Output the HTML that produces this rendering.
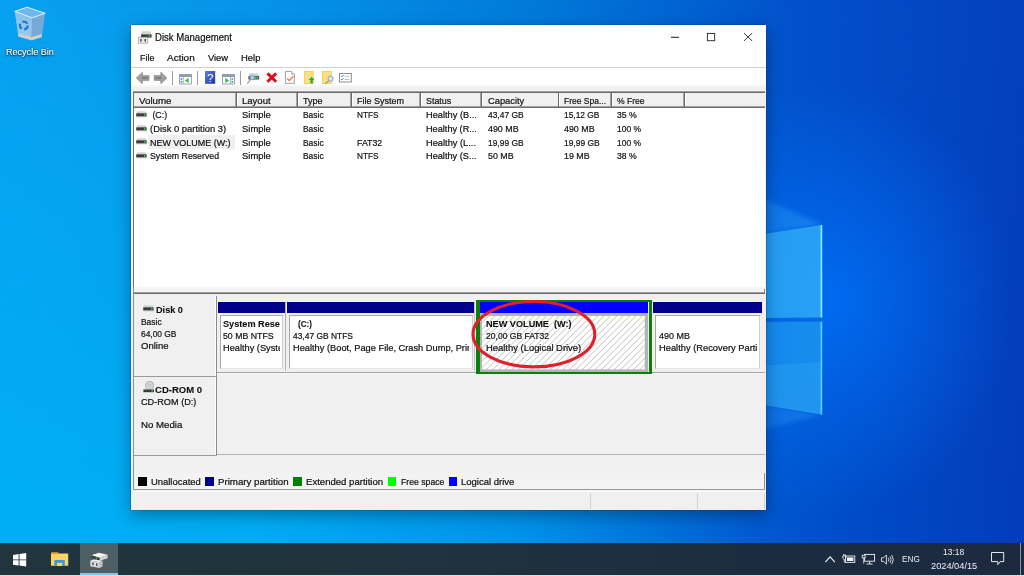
<!DOCTYPE html>
<html lang="en"><head><meta charset="utf-8"><title>Disk Management</title>
<style>
html,body{margin:0;padding:0}
body{width:1024px;height:576px;overflow:hidden;position:relative;font-family:"Liberation Sans",sans-serif;font-size:9.5px;background:#0a6fd6;-webkit-text-stroke:.22px currentColor}
div,span,svg{box-sizing:border-box}
svg{position:absolute;overflow:visible}
</style></head><body>
<div id="wallpaper" style="position:absolute;left:0;top:0;width:1024px;height:576px;overflow:hidden;background:linear-gradient(90deg,#00b0f6 0.0%,#00aff5 24.4%,#00a0f0 39.1%,#0096eb 50.0%,#0078dc 62.5%,#005ad0 74.2%,#004cc8 83.0%,#043cba 100.0%)"><div style="position:absolute;left:0;top:0;width:1024px;height:576px;background:linear-gradient(90deg,#06a0f0 0.0%,#089eee 5.9%,#0590e6 29.3%,#0078d8 52.7%,#0060d0 68.4%,#0250ca 78.1%,#0440be 100.0%);-webkit-mask-image:linear-gradient(180deg,#000 0%,rgba(0,0,0,0) 100%);mask-image:linear-gradient(180deg,#000 0%,rgba(0,0,0,0) 100%)"></div><div style="position:absolute;left:0;top:0;width:1024px;height:576px;background:radial-gradient(ellipse 185px 215px at 828px 300px,rgba(0,118,255,.72),rgba(0,118,255,0) 100%)"></div><svg width="1024" height="576" style="left:0;top:0"><defs><linearGradient id="pg" x1="0" x2="1"><stop offset="0" stop-color="#22a6f6"/><stop offset="1" stop-color="#34b0f8"/></linearGradient><linearGradient id="pg2" x1="0" x2="1"><stop offset="0" stop-color="#1890ee"/><stop offset="1" stop-color="#209cf2"/></linearGradient></defs><linearGradient id="bm" x1="1" x2="0"><stop offset="0" stop-color="#38b0ff" stop-opacity=".42"/><stop offset="1" stop-color="#20a0ff" stop-opacity=".12"/></linearGradient><filter id="bl" x="-20%" y="-20%" width="140%" height="140%"><feGaussianBlur stdDeviation="2.5"/></filter><polygon points="822,225 700,170 700,243" fill="url(#bm)" filter="url(#bl)"/><polygon points="822,414.6 700,395 700,446" fill="url(#bm)" opacity=".8" filter="url(#bl)"/><polygon points="660,250 822,225 822,317.5 660,319" fill="url(#pg)" opacity=".78"/><polygon points="660,322 822,321.7 822,414.6 660,388" fill="url(#pg2)" opacity=".72"/><polygon points="660,372 822,362 822,414.6 660,388" fill="#38b0f8" opacity=".28"/><line x1="821.4" y1="225" x2="821.4" y2="317.5" stroke="#86ecff" stroke-width="1.7"/><line x1="821.4" y1="321.7" x2="821.4" y2="414.6" stroke="#5cd4fd" stroke-width="1.6"/></svg></div>
<div id="recycle-bin" style="position:absolute;left:0;top:0"><svg width="34" height="36" viewBox="0 0 34 36" style="left:12.5px;top:6px"><defs><linearGradient id="rb" x1="0" y1="0" x2="0" y2="1"><stop offset="0" stop-color="#8ec2e8"/><stop offset="1" stop-color="#a6cdea"/></linearGradient></defs><polygon points="1.7,5.4 19.2,11.8 18.6,34.3 5.5,30.5" fill="url(#rb)" opacity=".95"/><polygon points="19.2,11.8 32.2,7.3 28.6,31.2 18.6,34.3" fill="#7caad6" opacity=".95"/><polygon points="1.7,5.4 14.2,1.2 32.2,7.3 19.2,11.8" fill="#6cb8ee" stroke="#e4f2fb" stroke-width="1"/><polygon points="5.1,27.2 18.7,31 29.1,27.8 28.6,31.2 18.6,34.3 5.5,30.5" fill="#cfcfcf"/><circle cx="10.8" cy="19.6" r="3.9" fill="none" stroke="#1a7ad8" stroke-width="2.3" stroke-dasharray="5.6 2.6"/></svg>
<span style="position:absolute;left:6.10px;top:46.76px;font-size:9.5px;line-height:1;white-space:pre;color:#fff;transform-origin:0 0;transform:scaleX(0.9527);-webkit-text-stroke:.1px #fff;text-shadow:0 1px 2px rgba(0,0,0,.9),0 0 2px rgba(0,0,0,.7);">Recycle Bin</span>
</div>
<div id="window" style="position:absolute;left:0;top:0">
<div style="position:absolute;left:131.40px;top:25.20px;width:635.10px;height:484.50px;background:#f0f0f0;box-shadow:0 0 0 .6px rgba(0,55,105,.35),0 5px 15px rgba(0,0,0,.34);"></div>
<div style="position:absolute;left:131.40px;top:25.20px;width:635.10px;height:60.10px;background:#ffffff;"></div>
<div style="position:absolute;left:131.40px;top:67.10px;width:635.10px;height:0.90px;background:#cfcfcf;"></div>
<div style="position:absolute;left:131.40px;top:85.30px;width:635.10px;height:1.60px;background:#f6f6f6;"></div>
<svg width="14" height="13" viewBox="0 0 14 13" style="left:138px;top:30.6px"><polygon points="4,0.3 12.3,0.3 13.6,3.6 3,3.6" fill="#d2d2d2"/><rect x="3" y="3.4" width="10.6" height="3.2" fill="#3c3c3c"/><rect x="10.6" y="4.3" width="1.6" height="1.4" fill="#35e04a"/><rect x="0.4" y="6.3" width="9.4" height="5.9" fill="#e9e9e9" stroke="#a8a8a8" stroke-width=".8"/><rect x="2.3" y="8" width="1.3" height="2.6" fill="#333"/><rect x="6.6" y="8" width="1.3" height="2.6" fill="#333"/></svg>
<span style="position:absolute;left:155.25px;top:32.94px;font-size:10px;line-height:1;white-space:pre;color:#111;transform-origin:0 0;transform:scaleX(0.9554);">Disk Management</span>
<svg width="100" height="12" viewBox="0 0 100 12" style="left:665px;top:31px"><line x1="6" y1="6.3" x2="14.1" y2="6.3" stroke="#1a1a1a" stroke-width="1"/><rect x="42.4" y="2.4" width="7.3" height="7.3" fill="none" stroke="#222" stroke-width=".9"/><path d="M79 2.1 L87.2 9.9 M87.2 2.1 L79 9.9" stroke="#222" stroke-width=".9" fill="none"/></svg>
<span style="position:absolute;left:140.10px;top:53.46px;font-size:9.5px;line-height:1;white-space:pre;color:#111;transform-origin:0 0;transform:scaleX(0.9404);">File</span>
<span style="position:absolute;left:167.40px;top:53.46px;font-size:9.5px;line-height:1;white-space:pre;color:#111;transform-origin:0 0;transform:scaleX(1.0490);">Action</span>
<span style="position:absolute;left:208.00px;top:53.46px;font-size:9.5px;line-height:1;white-space:pre;color:#111;transform-origin:0 0;transform:scaleX(0.9793);">View</span>
<span style="position:absolute;left:240.90px;top:53.46px;font-size:9.5px;line-height:1;white-space:pre;color:#111;transform-origin:0 0;transform:scaleX(0.9925);">Help</span>
<div id="toolbar" style="position:absolute;left:0;top:0">
<svg width="13.2" height="12" viewBox="0 0 13.2 12" style="left:135.8px;top:72px"><path d="M0.4 6 L6.3 0.4 L6.3 3.7 L12.9 3.7 L12.9 8.3 L6.3 8.3 L6.3 11.6 Z" fill="#a2a2a2" stroke="#7e7e7e" stroke-width=".8" stroke-linejoin="round"/><path d="M5.6 5 L11.8 5 L11.8 7 L5.6 7Z" fill="#6a6a6a" opacity=".6"/></svg>
<svg width="13.2" height="12" viewBox="0 0 13.2 12" style="left:154px;top:72px"><path d="M12.8 6 L6.9 0.4 L6.9 3.7 L0.3 3.7 L0.3 8.3 L6.9 8.3 L6.9 11.6 Z" fill="#a2a2a2" stroke="#7e7e7e" stroke-width=".8" stroke-linejoin="round"/><path d="M1.4 5 L7.6 5 L7.6 7 L1.4 7Z" fill="#6a6a6a" opacity=".6"/></svg>
<div style="position:absolute;left:172.00px;top:70.50px;width:0.90px;height:14.20px;background:#9d9d9d;"></div>
<div style="position:absolute;left:197.00px;top:70.50px;width:0.90px;height:14.20px;background:#9d9d9d;"></div>
<div style="position:absolute;left:240.00px;top:70.50px;width:0.90px;height:14.20px;background:#9d9d9d;"></div>
<svg width="12.8" height="10.4" viewBox="0 0 12.8 10.4" style="left:179.1px;top:73.6px"><rect x=".4" y=".4" width="12" height="9.6" fill="#fdfdfd" stroke="#8692a4" stroke-width=".8"/><rect x=".4" y=".4" width="12" height="2.6" fill="#8f9aab"/><line x1="4.2" y1="3" x2="4.2" y2="10" stroke="#8692a4" stroke-width=".7"/><rect x="1.6" y="4.2" width="1.6" height="1.6" fill="#4a86d8"/><rect x="1.6" y="7" width="1.6" height="1.6" fill="#4a86d8"/><path d="M6 6.5 L9.6 4 L9.6 9 Z" fill="#2db83a"/></svg>
<svg width="10.2" height="12.8" viewBox="0 0 10.2 12.8" style="left:204.9px;top:71px"><defs><linearGradient id="hg" x1="0" y1="0" x2="1" y2="1"><stop offset="0" stop-color="#5a7fe0"/><stop offset="1" stop-color="#1c35a8"/></linearGradient></defs><rect width="10.2" height="12.8" fill="url(#hg)"/><text x="5.1" y="10.6" text-anchor="middle" font-family="Liberation Sans, sans-serif" font-weight="400" font-size="11.5" fill="#fff" style="-webkit-text-stroke:0">?</text></svg>
<svg width="12.8" height="10.4" viewBox="0 0 12.8 10.4" style="left:222.2px;top:73.6px"><rect x=".4" y=".4" width="12" height="9.6" fill="#fdfdfd" stroke="#8692a4" stroke-width=".8"/><rect x=".4" y=".4" width="12" height="2.6" fill="#8f9aab"/><line x1="8.6" y1="3" x2="8.6" y2="10" stroke="#8692a4" stroke-width=".7"/><rect x="9.6" y="4.2" width="1.6" height="1.6" fill="#4a86d8"/><rect x="9.6" y="7" width="1.6" height="1.6" fill="#4a86d8"/><path d="M7 6.5 L3.4 4 L3.4 9 Z" fill="#2db83a"/></svg>
<svg width="12.4" height="11" viewBox="0 0 12.4 11" style="left:247px;top:73px"><polygon points="2.6,0.2 11,0.2 12.2,3.2 1.4,3.2" fill="#cfd2d6"/><rect x="1.4" y="3.1" width="10.8" height="3.4" fill="#4a5058"/><rect x="7.6" y="4" width="1.5" height="1.6" fill="#3fe052"/><rect x="9.6" y="4" width="1.5" height="1.6" fill="#3fe052"/><circle cx="5.2" cy="4.6" r="2.3" fill="#a8cdee" stroke="#7d8ea3" stroke-width=".8"/><line x1="3.6" y1="6.4" x2="0.3" y2="10.6" stroke="#8a93a0" stroke-width="1.1"/></svg>
<svg width="11.6" height="11.2" viewBox="0 0 11.6 11.2" style="left:266.3px;top:72.1px"><path d="M1.4 1.4 L10.2 9.8 M10.2 1.4 L1.4 9.8" stroke="#d8101c" stroke-width="2.9" fill="none"/></svg>
<svg width="10" height="13" viewBox="0 0 10 13" style="left:285.4px;top:71px"><path d="M0.4 0.4 L6.6 0.4 L9.4 3.2 L9.4 12.4 L0.4 12.4 Z" fill="#fff" stroke="#8a8a8a" stroke-width=".8"/><path d="M6.6 0.4 L6.6 3.2 L9.4 3.2" fill="#e8e8e8" stroke="#8a8a8a" stroke-width=".6"/><path d="M2.2 7.4 L4.2 9.6 L8.4 5.2" stroke="#f0702c" stroke-width="1.3" fill="none"/></svg>
<svg width="10.6" height="13" viewBox="0 0 10.6 13" style="left:304px;top:71px"><rect x=".4" y=".4" width="8.8" height="12.2" fill="#fce083" stroke="#efca50" stroke-width=".8"/><path d="M7.6 5.8 L10.6 9 L8.8 9 L8.8 12.4 L6.4 12.4 L6.4 9 L4.6 9 Z" fill="#22b638"/></svg>
<svg width="12" height="13" viewBox="0 0 12 13" style="left:322.2px;top:71px"><rect x=".4" y=".4" width="8.8" height="12.2" fill="#fce083" stroke="#efca50" stroke-width=".8"/><circle cx="8.6" cy="7.6" r="2.6" fill="#cfe6f8" stroke="#8a98aa" stroke-width=".9"/><line x1="6.8" y1="9.6" x2="3.4" y2="12.6" stroke="#8a93a0" stroke-width="1.2"/></svg>
<svg width="13" height="9.6" viewBox="0 0 13 9.6" style="left:339.2px;top:73.2px"><rect x=".5" y=".5" width="11.8" height="8.5" fill="#fff" stroke="#8a8a8a" stroke-width="1"/><path d="M2.2 2.8 L3 3.8 L4.4 2" stroke="#2a6fe0" stroke-width=".9" fill="none"/><path d="M2.2 6 L3 7 L4.4 5.2" stroke="#2a6fe0" stroke-width=".9" fill="none"/><line x1="5.6" y1="3.2" x2="10.4" y2="3.2" stroke="#a0a8b4" stroke-width=".8"/><line x1="5.6" y1="6.4" x2="10.4" y2="6.4" stroke="#a0a8b4" stroke-width=".8"/></svg>
</div>
<div id="volume-list" style="position:absolute;left:0;top:0">
<div style="position:absolute;left:133.30px;top:90.80px;width:632.10px;height:196.20px;background:#ffffff;"></div>
<div style="position:absolute;left:133.30px;top:90.80px;width:632.10px;height:1.00px;background:#a0a0a0;"></div>
<div style="position:absolute;left:133.30px;top:91.80px;width:632.10px;height:1.00px;background:#6a6a6a;"></div>
<div style="position:absolute;left:132.80px;top:90.80px;width:0.70px;height:196.20px;background:#a0a0a0;"></div>
<div style="position:absolute;left:133.40px;top:91.70px;width:0.85px;height:195.30px;background:#727272;"></div>
<div style="position:absolute;left:134.20px;top:92.70px;width:631.20px;height:13.40px;background:#f0f0f0;"></div>
<div style="position:absolute;left:134.20px;top:106.10px;width:631.20px;height:0.90px;background:#a0a0a0;"></div>
<div style="position:absolute;left:134.20px;top:107.00px;width:631.20px;height:0.90px;background:#6e6e6e;"></div>
<div style="position:absolute;left:235.30px;top:92.70px;width:0.85px;height:13.60px;background:#a3a3a3;"></div>
<div style="position:absolute;left:236.15px;top:92.70px;width:0.85px;height:15.20px;background:#6a6a6a;"></div>
<div style="position:absolute;left:237.00px;top:92.70px;width:0.70px;height:13.40px;background:#ffffff;"></div>
<div style="position:absolute;left:296.30px;top:92.70px;width:0.85px;height:13.60px;background:#a3a3a3;"></div>
<div style="position:absolute;left:297.15px;top:92.70px;width:0.85px;height:15.20px;background:#6a6a6a;"></div>
<div style="position:absolute;left:298.00px;top:92.70px;width:0.70px;height:13.40px;background:#ffffff;"></div>
<div style="position:absolute;left:350.30px;top:92.70px;width:0.85px;height:13.60px;background:#a3a3a3;"></div>
<div style="position:absolute;left:351.15px;top:92.70px;width:0.85px;height:15.20px;background:#6a6a6a;"></div>
<div style="position:absolute;left:352.00px;top:92.70px;width:0.70px;height:13.40px;background:#ffffff;"></div>
<div style="position:absolute;left:419.10px;top:92.70px;width:0.85px;height:13.60px;background:#a3a3a3;"></div>
<div style="position:absolute;left:419.95px;top:92.70px;width:0.85px;height:15.20px;background:#6a6a6a;"></div>
<div style="position:absolute;left:420.80px;top:92.70px;width:0.70px;height:13.40px;background:#ffffff;"></div>
<div style="position:absolute;left:480.30px;top:92.70px;width:0.85px;height:13.60px;background:#a3a3a3;"></div>
<div style="position:absolute;left:481.15px;top:92.70px;width:0.85px;height:15.20px;background:#6a6a6a;"></div>
<div style="position:absolute;left:482.00px;top:92.70px;width:0.70px;height:13.40px;background:#ffffff;"></div>
<div style="position:absolute;left:557.50px;top:92.70px;width:0.85px;height:13.60px;background:#a3a3a3;"></div>
<div style="position:absolute;left:558.35px;top:92.70px;width:0.85px;height:15.20px;background:#6a6a6a;"></div>
<div style="position:absolute;left:559.20px;top:92.70px;width:0.70px;height:13.40px;background:#ffffff;"></div>
<div style="position:absolute;left:610.30px;top:92.70px;width:0.85px;height:13.60px;background:#a3a3a3;"></div>
<div style="position:absolute;left:611.15px;top:92.70px;width:0.85px;height:15.20px;background:#6a6a6a;"></div>
<div style="position:absolute;left:612.00px;top:92.70px;width:0.70px;height:13.40px;background:#ffffff;"></div>
<div style="position:absolute;left:683.30px;top:92.70px;width:0.85px;height:13.60px;background:#a3a3a3;"></div>
<div style="position:absolute;left:684.15px;top:92.70px;width:0.85px;height:15.20px;background:#6a6a6a;"></div>
<div style="position:absolute;left:685.00px;top:92.70px;width:0.70px;height:13.40px;background:#ffffff;"></div>
<span style="position:absolute;left:138.60px;top:95.66px;font-size:9.5px;line-height:1;white-space:pre;color:#111;transform-origin:0 0;transform:scaleX(1.0256);">Volume</span>
<span style="position:absolute;left:241.75px;top:95.66px;font-size:9.5px;line-height:1;white-space:pre;color:#111;transform-origin:0 0;transform:scaleX(1.0024);">Layout</span>
<span style="position:absolute;left:303.25px;top:95.66px;font-size:9.5px;line-height:1;white-space:pre;color:#111;transform-origin:0 0;transform:scaleX(0.9510);">Type</span>
<span style="position:absolute;left:356.90px;top:95.66px;font-size:9.5px;line-height:1;white-space:pre;color:#111;transform-origin:0 0;transform:scaleX(0.9451);">File System</span>
<span style="position:absolute;left:425.75px;top:95.66px;font-size:9.5px;line-height:1;white-space:pre;color:#111;transform-origin:0 0;transform:scaleX(0.9355);">Status</span>
<span style="position:absolute;left:487.50px;top:95.66px;font-size:9.5px;line-height:1;white-space:pre;color:#111;transform-origin:0 0;transform:scaleX(0.9806);">Capacity</span>
<span style="position:absolute;left:564.25px;top:95.66px;font-size:9.5px;line-height:1;white-space:pre;color:#111;transform-origin:0 0;transform:scaleX(0.8936);">Free Spa...</span>
<span style="position:absolute;left:617.40px;top:95.66px;font-size:9.5px;line-height:1;white-space:pre;color:#111;transform-origin:0 0;transform:scaleX(0.9012);">% Free</span>
<svg width="10.8" height="6.4" viewBox="0 0 10.8 6.4" style="left:136.4px;top:111.2px"><polygon points="1.4,0.2 9.4,0.2 10.6,2.4 0.2,2.4" fill="#d4d4d4"/><rect x=".2" y="2.3" width="10.4" height="3.3" fill="#3b3b3b"/><rect x="8" y="3.2" width="1.5" height="1.4" fill="#36e04a"/><rect x=".2" y="5.5" width="10.4" height=".8" fill="#bdbdbd"/></svg>
<span style="position:absolute;left:149.90px;top:110.36px;font-size:9.5px;line-height:1;white-space:pre;color:#111;transform-origin:0 0;transform:scaleX(0.9259);"> (C:)</span>
<span style="position:absolute;left:241.75px;top:110.36px;font-size:9.5px;line-height:1;white-space:pre;color:#111;transform-origin:0 0;transform:scaleX(0.9915);">Simple</span>
<span style="position:absolute;left:302.90px;top:110.36px;font-size:9.5px;line-height:1;white-space:pre;color:#111;transform-origin:0 0;transform:scaleX(0.8866);">Basic</span>
<span style="position:absolute;left:356.90px;top:110.36px;font-size:9.5px;line-height:1;white-space:pre;color:#111;transform-origin:0 0;transform:scaleX(0.8665);">NTFS</span>
<span style="position:absolute;left:425.75px;top:110.36px;font-size:9.5px;line-height:1;white-space:pre;color:#111;transform-origin:0 0;transform:scaleX(0.9736);">Healthy (B...</span>
<span style="position:absolute;left:487.50px;top:110.36px;font-size:9.5px;line-height:1;white-space:pre;color:#111;transform-origin:0 0;transform:scaleX(0.8869);">43,47 GB</span>
<span style="position:absolute;left:564.25px;top:110.36px;font-size:9.5px;line-height:1;white-space:pre;color:#111;transform-origin:0 0;transform:scaleX(0.8819);">15,12 GB</span>
<span style="position:absolute;left:617.40px;top:110.36px;font-size:9.5px;line-height:1;white-space:pre;color:#111;transform-origin:0 0;transform:scaleX(0.9097);">35 %</span>
<svg width="10.8" height="6.4" viewBox="0 0 10.8 6.4" style="left:136.4px;top:124.77px"><polygon points="1.4,0.2 9.4,0.2 10.6,2.4 0.2,2.4" fill="#d4d4d4"/><rect x=".2" y="2.3" width="10.4" height="3.3" fill="#3b3b3b"/><rect x="8" y="3.2" width="1.5" height="1.4" fill="#36e04a"/><rect x=".2" y="5.5" width="10.4" height=".8" fill="#bdbdbd"/></svg>
<span style="position:absolute;left:149.90px;top:123.93px;font-size:9.5px;line-height:1;white-space:pre;color:#111;transform-origin:0 0;transform:scaleX(0.9884);">(Disk 0 partition 3)</span>
<span style="position:absolute;left:241.75px;top:123.93px;font-size:9.5px;line-height:1;white-space:pre;color:#111;transform-origin:0 0;transform:scaleX(0.9915);">Simple</span>
<span style="position:absolute;left:302.90px;top:123.93px;font-size:9.5px;line-height:1;white-space:pre;color:#111;transform-origin:0 0;transform:scaleX(0.8866);">Basic</span>
<span style="position:absolute;left:425.75px;top:123.93px;font-size:9.5px;line-height:1;white-space:pre;color:#111;transform-origin:0 0;transform:scaleX(0.9641);">Healthy (R...</span>
<span style="position:absolute;left:487.50px;top:123.93px;font-size:9.5px;line-height:1;white-space:pre;color:#111;transform-origin:0 0;transform:scaleX(0.9344);">490 MB</span>
<span style="position:absolute;left:564.25px;top:123.93px;font-size:9.5px;line-height:1;white-space:pre;color:#111;transform-origin:0 0;transform:scaleX(0.9344);">490 MB</span>
<span style="position:absolute;left:617.40px;top:123.93px;font-size:9.5px;line-height:1;white-space:pre;color:#111;transform-origin:0 0;transform:scaleX(0.8910);">100 %</span>
<div style="position:absolute;left:148.00px;top:135.30px;width:87.00px;height:13.30px;background:#efefef;"></div>
<svg width="10.8" height="6.4" viewBox="0 0 10.8 6.4" style="left:136.4px;top:138.34px"><polygon points="1.4,0.2 9.4,0.2 10.6,2.4 0.2,2.4" fill="#d4d4d4"/><rect x=".2" y="2.3" width="10.4" height="3.3" fill="#3b3b3b"/><rect x="8" y="3.2" width="1.5" height="1.4" fill="#36e04a"/><rect x=".2" y="5.5" width="10.4" height=".8" fill="#bdbdbd"/></svg>
<span style="position:absolute;left:149.90px;top:137.50px;font-size:9.5px;line-height:1;white-space:pre;color:#111;transform-origin:0 0;transform:scaleX(0.9422);">NEW VOLUME (W:)</span>
<span style="position:absolute;left:241.75px;top:137.50px;font-size:9.5px;line-height:1;white-space:pre;color:#111;transform-origin:0 0;transform:scaleX(0.9915);">Simple</span>
<span style="position:absolute;left:302.90px;top:137.50px;font-size:9.5px;line-height:1;white-space:pre;color:#111;transform-origin:0 0;transform:scaleX(0.8866);">Basic</span>
<span style="position:absolute;left:356.90px;top:137.50px;font-size:9.5px;line-height:1;white-space:pre;color:#111;transform-origin:0 0;transform:scaleX(0.9237);">FAT32</span>
<span style="position:absolute;left:425.75px;top:137.50px;font-size:9.5px;line-height:1;white-space:pre;color:#111;transform-origin:0 0;transform:scaleX(0.9762);">Healthy (L...</span>
<span style="position:absolute;left:487.50px;top:137.50px;font-size:9.5px;line-height:1;white-space:pre;color:#111;transform-origin:0 0;transform:scaleX(0.8869);">19,99 GB</span>
<span style="position:absolute;left:564.25px;top:137.50px;font-size:9.5px;line-height:1;white-space:pre;color:#111;transform-origin:0 0;transform:scaleX(0.8869);">19,99 GB</span>
<span style="position:absolute;left:617.40px;top:137.50px;font-size:9.5px;line-height:1;white-space:pre;color:#111;transform-origin:0 0;transform:scaleX(0.8910);">100 %</span>
<svg width="10.8" height="6.4" viewBox="0 0 10.8 6.4" style="left:136.4px;top:151.91px"><polygon points="1.4,0.2 9.4,0.2 10.6,2.4 0.2,2.4" fill="#d4d4d4"/><rect x=".2" y="2.3" width="10.4" height="3.3" fill="#3b3b3b"/><rect x="8" y="3.2" width="1.5" height="1.4" fill="#36e04a"/><rect x=".2" y="5.5" width="10.4" height=".8" fill="#bdbdbd"/></svg>
<span style="position:absolute;left:149.90px;top:151.07px;font-size:9.5px;line-height:1;white-space:pre;color:#111;transform-origin:0 0;transform:scaleX(0.9202);">System Reserved</span>
<span style="position:absolute;left:241.75px;top:151.07px;font-size:9.5px;line-height:1;white-space:pre;color:#111;transform-origin:0 0;transform:scaleX(0.9915);">Simple</span>
<span style="position:absolute;left:302.90px;top:151.07px;font-size:9.5px;line-height:1;white-space:pre;color:#111;transform-origin:0 0;transform:scaleX(0.8866);">Basic</span>
<span style="position:absolute;left:356.90px;top:151.07px;font-size:9.5px;line-height:1;white-space:pre;color:#111;transform-origin:0 0;transform:scaleX(0.8665);">NTFS</span>
<span style="position:absolute;left:425.75px;top:151.07px;font-size:9.5px;line-height:1;white-space:pre;color:#111;transform-origin:0 0;transform:scaleX(0.9678);">Healthy (S...</span>
<span style="position:absolute;left:487.50px;top:151.07px;font-size:9.5px;line-height:1;white-space:pre;color:#111;transform-origin:0 0;transform:scaleX(0.9320);">50 MB</span>
<span style="position:absolute;left:564.25px;top:151.07px;font-size:9.5px;line-height:1;white-space:pre;color:#111;transform-origin:0 0;transform:scaleX(0.9356);">19 MB</span>
<span style="position:absolute;left:617.40px;top:151.07px;font-size:9.5px;line-height:1;white-space:pre;color:#111;transform-origin:0 0;transform:scaleX(0.9097);">38 %</span>
</div>
<div id="disk-pane" style="position:absolute;left:0;top:0">
<div style="position:absolute;left:131.40px;top:287.00px;width:635.10px;height:4.50px;background:#f4f4f4;"></div>
<div style="position:absolute;left:132.80px;top:291.50px;width:632.00px;height:1.00px;background:#a0a0a0;"></div>
<div style="position:absolute;left:132.80px;top:292.50px;width:632.00px;height:1.00px;background:#6a6a6a;"></div>
<div style="position:absolute;left:764.00px;top:288.80px;width:0.80px;height:4.60px;background:#8a8a8a;"></div>
<div style="position:absolute;left:132.50px;top:287.00px;width:1.15px;height:203.00px;background:#909090;"></div>
<div style="position:absolute;left:215.00px;top:296.00px;width:0.80px;height:159.50px;background:#ffffff;"></div>
<div style="position:absolute;left:215.90px;top:296.00px;width:1.00px;height:159.80px;background:#8c8c8c;"></div>
<div style="position:absolute;left:134.00px;top:375.90px;width:82.50px;height:1.00px;background:#9a9a9a;"></div>
<div style="position:absolute;left:216.90px;top:372.20px;width:547.90px;height:1.00px;background:#a2a2a2;"></div>
<div style="position:absolute;left:216.90px;top:373.30px;width:547.90px;height:0.90px;background:#fafafa;"></div>
<div style="position:absolute;left:134.00px;top:454.80px;width:82.50px;height:1.00px;background:#9a9a9a;"></div>
<div style="position:absolute;left:216.90px;top:453.90px;width:547.90px;height:0.90px;background:#b4b4b4;"></div>
<svg width="10.8" height="6.4" viewBox="0 0 10.8 6.4" style="left:142.7px;top:305.4px"><polygon points="1.4,0.2 9.4,0.2 10.6,2.4 0.2,2.4" fill="#d4d4d4"/><rect x=".2" y="2.3" width="10.4" height="3.3" fill="#3b3b3b"/><rect x="8" y="3.2" width="1.5" height="1.4" fill="#36e04a"/><rect x=".2" y="5.5" width="10.4" height=".8" fill="#bdbdbd"/></svg>
<span style="position:absolute;left:155.50px;top:305.46px;font-size:9.5px;line-height:1;white-space:pre;color:#111;transform-origin:0 0;transform:scaleX(0.9607);font-weight:700;-webkit-text-stroke:.1px currentColor;">Disk 0</span>
<span style="position:absolute;left:141.10px;top:317.36px;font-size:9.5px;line-height:1;white-space:pre;color:#111;transform-origin:0 0;transform:scaleX(0.8866);">Basic</span>
<span style="position:absolute;left:141.10px;top:329.36px;font-size:9.5px;line-height:1;white-space:pre;color:#111;transform-origin:0 0;transform:scaleX(0.8819);">64,00 GB</span>
<span style="position:absolute;left:141.10px;top:341.36px;font-size:9.5px;line-height:1;white-space:pre;color:#111;transform-origin:0 0;transform:scaleX(1.0011);">Online</span>
<svg width="12" height="11.6" viewBox="0 0 12 11.6" style="left:142.6px;top:380.8px"><circle cx="6.6" cy="4.4" r="4" fill="#dcdcdc" stroke="#9a9a9a" stroke-width=".8"/><circle cx="6.6" cy="4.4" r="1.3" fill="#f4f4f4" stroke="#8a8a8a" stroke-width=".6"/><polygon points="1.6,7.4 10,7.4 11,8.6 .4,8.6" fill="#d0d0d0"/><rect x=".4" y="8.5" width="10.6" height="2.7" fill="#3b3b3b"/><rect x="8.4" y="9.2" width="1.5" height="1.3" fill="#36e04a"/></svg>
<span style="position:absolute;left:155.25px;top:384.76px;font-size:9.5px;line-height:1;white-space:pre;color:#111;transform-origin:0 0;transform:scaleX(1.0025);font-weight:700;-webkit-text-stroke:.1px currentColor;">CD-ROM 0</span>
<span style="position:absolute;left:141.10px;top:396.56px;font-size:9.5px;line-height:1;white-space:pre;color:#111;transform-origin:0 0;transform:scaleX(0.9632);">CD-ROM (D:)</span>
<span style="position:absolute;left:141.10px;top:420.36px;font-size:9.5px;line-height:1;white-space:pre;color:#111;transform-origin:0 0;transform:scaleX(1.0154);">No Media</span>
<div style="position:absolute;left:217.70px;top:302.30px;width:67.20px;height:10.60px;background:#00008b;"></div><div style="position:absolute;left:219.80px;top:314.90px;width:63.60px;height:54.40px;background:#ffffff;border:.9px solid #a8a8a8;border-bottom-color:#e6e6e6;border-right-color:#cfcfcf;"></div>
<div style="position:absolute;left:286.90px;top:302.30px;width:187.20px;height:10.60px;background:#00008b;"></div><div style="position:absolute;left:289.00px;top:314.90px;width:183.60px;height:54.40px;background:#ffffff;border:.9px solid #a8a8a8;border-bottom-color:#e6e6e6;border-right-color:#cfcfcf;"></div>
<div style="position:absolute;left:652.90px;top:302.30px;width:109.00px;height:10.60px;background:#00008b;"></div><div style="position:absolute;left:655.00px;top:314.90px;width:105.40px;height:54.40px;background:#ffffff;border:.9px solid #a8a8a8;border-bottom-color:#e6e6e6;border-right-color:#cfcfcf;"></div>
<div style="position:absolute;left:284.90px;top:302.30px;width:1.30px;height:69.20px;background:#b2b2b2;"></div>
<div style="position:absolute;left:474.30px;top:302.30px;width:1.20px;height:69.20px;background:#c4c4c4;"></div>
<div style="position:absolute;left:223.10px;top:317.56px;width:57.10px;height:12.50px;overflow:hidden"><span style="position:absolute;left:0;top:1px;font-size:9.5px;line-height:1;white-space:pre;color:#111;transform-origin:0 0;transform:scaleX(0.9619);font-weight:700;-webkit-text-stroke:.1px currentColor;">System Reserved</span></div>
<span style="position:absolute;left:223.10px;top:330.76px;font-size:9.5px;line-height:1;white-space:pre;color:#111;transform-origin:0 0;transform:scaleX(0.9216);">50 MB NTFS</span>
<div style="position:absolute;left:223.10px;top:341.76px;width:56.80px;height:12.50px;overflow:hidden"><span style="position:absolute;left:0;top:1px;font-size:9.5px;line-height:1;white-space:pre;color:#111;transform-origin:0 0;transform:scaleX(0.9717);">Healthy (System, Active, Primary Partition)</span></div>
<span style="position:absolute;left:297.90px;top:318.56px;font-size:9.5px;line-height:1;white-space:pre;color:#111;transform-origin:0 0;transform:scaleX(0.8558);font-weight:700;-webkit-text-stroke:.1px currentColor;">(C:)</span>
<span style="position:absolute;left:292.90px;top:330.76px;font-size:9.5px;line-height:1;white-space:pre;color:#111;transform-origin:0 0;transform:scaleX(0.8862);">43,47 GB NTFS</span>
<div style="position:absolute;left:292.90px;top:341.76px;width:176.60px;height:12.50px;overflow:hidden"><span style="position:absolute;left:0;top:1px;font-size:9.5px;line-height:1;white-space:pre;color:#111;transform-origin:0 0;transform:scaleX(0.9750);">Healthy (Boot, Page File, Crash Dump, Primary Partition)</span></div>
<span style="position:absolute;left:658.50px;top:330.76px;font-size:9.5px;line-height:1;white-space:pre;color:#111;transform-origin:0 0;transform:scaleX(0.9435);">490 MB</span>
<div style="position:absolute;left:658.50px;top:341.76px;width:98.80px;height:12.50px;overflow:hidden"><span style="position:absolute;left:0;top:1px;font-size:9.5px;line-height:1;white-space:pre;color:#111;transform-origin:0 0;transform:scaleX(0.9809);">Healthy (Recovery Partition)</span></div>
<div style="position:absolute;left:476.00px;top:300.30px;width:176.00px;height:73.30px;background:#0a800a;"></div>
<div style="position:absolute;left:479.60px;top:302.20px;width:169.30px;height:69.50px;background:#f4f4f4;"></div>
<div style="position:absolute;left:479.60px;top:302.20px;width:168.10px;height:10.70px;background:#0000ff;"></div>
<div style="position:absolute;left:479.60px;top:312.90px;width:168.30px;height:58.90px;background:#b4b4b4;"></div>
<svg width="163" height="54" viewBox="0 0 163 54" style="left:482.4px;top:315.6px"><defs><pattern id="hatch" width="6.4" height="6.4" patternUnits="userSpaceOnUse" patternTransform="translate(0.3 0)"><rect width="6.4" height="6.4" fill="#fff"/><path d="M-1 7.4 L7.4 -1 M-1 1 L1 -1 M5.4 7.4 L7.4 5.4" stroke="#a4a4a4" stroke-width=".72"/></pattern></defs><rect width="162.8" height="53.4" fill="url(#hatch)"/></svg>
<span style="position:absolute;left:486.00px;top:318.56px;font-size:9.5px;line-height:1;white-space:pre;color:#111;transform-origin:0 0;transform:scaleX(0.9616);font-weight:700;-webkit-text-stroke:.1px currentColor;">NEW VOLUME  (W:)</span>
<span style="position:absolute;left:486.00px;top:330.76px;font-size:9.5px;line-height:1;white-space:pre;color:#111;transform-origin:0 0;transform:scaleX(0.8992);">20,00 GB FAT32</span>
<span style="position:absolute;left:486.00px;top:342.76px;font-size:9.5px;line-height:1;white-space:pre;color:#111;transform-origin:0 0;transform:scaleX(0.9907);">Healthy (Logical Drive)</span>
<svg width="140" height="80" viewBox="0 0 140 80" style="left:465px;top:295px"><ellipse cx="68.9" cy="39.2" rx="60.9" ry="32.7" fill="none" stroke="#e0202a" stroke-width="3.1"/></svg>
<div style="position:absolute;left:134.00px;top:472.90px;width:630.20px;height:16.20px;background:#f3f3f3;"></div>
<div style="position:absolute;left:764.00px;top:473.00px;width:0.90px;height:17.00px;background:#8e8e8e;"></div>
<div style="position:absolute;left:132.80px;top:489.30px;width:632.10px;height:1.10px;background:#9c9c9c;"></div>
<div style="position:absolute;left:132.80px;top:490.50px;width:633.20px;height:1.00px;background:#fcfcfc;"></div>
<div style="position:absolute;left:138.00px;top:476.60px;width:8.50px;height:9.50px;background:#000000;"></div>
<span style="position:absolute;left:150.50px;top:476.76px;font-size:9.5px;line-height:1;white-space:pre;color:#111;transform-origin:0 0;transform:scaleX(0.9916);">Unallocated</span>
<div style="position:absolute;left:205.10px;top:476.60px;width:8.50px;height:9.50px;background:#00008b;"></div>
<span style="position:absolute;left:217.90px;top:476.76px;font-size:9.5px;line-height:1;white-space:pre;color:#111;transform-origin:0 0;transform:scaleX(1.0206);">Primary partition</span>
<div style="position:absolute;left:293.10px;top:476.60px;width:8.50px;height:9.50px;background:#008000;"></div>
<span style="position:absolute;left:305.70px;top:476.76px;font-size:9.5px;line-height:1;white-space:pre;color:#111;transform-origin:0 0;transform:scaleX(1.0066);">Extended partition</span>
<div style="position:absolute;left:387.60px;top:476.60px;width:8.50px;height:9.50px;background:#00ff00;"></div>
<span style="position:absolute;left:400.50px;top:476.76px;font-size:9.5px;line-height:1;white-space:pre;color:#111;transform-origin:0 0;transform:scaleX(0.9131);">Free space</span>
<div style="position:absolute;left:448.50px;top:476.60px;width:8.50px;height:9.50px;background:#0000ff;"></div>
<span style="position:absolute;left:461.10px;top:476.76px;font-size:9.5px;line-height:1;white-space:pre;color:#111;transform-origin:0 0;transform:scaleX(1.0011);">Logical drive</span>
</div>
<div id="statusbar" style="position:absolute;left:0;top:0">
<div style="position:absolute;left:590.00px;top:493.00px;width:0.90px;height:15.60px;background:#d4d4d4;"></div>
<div style="position:absolute;left:696.50px;top:493.00px;width:0.90px;height:15.60px;background:#d4d4d4;"></div>
<div style="position:absolute;left:764.40px;top:493.00px;width:0.90px;height:15.60px;background:#d4d4d4;"></div>
</div>
</div>
<div id="taskbar" style="position:absolute;left:0;top:543px;width:1024px;height:33px;background:linear-gradient(90deg,#20353d 0%,#20333e 40%,#1c2c40 75%,#1b2a40 100%)">
</div>
<div id="taskbar-items" style="position:absolute;left:0;top:0">
<div style="position:absolute;left:80.00px;top:543.00px;width:38.00px;height:32.00px;background:#4f5f66;"></div>
<div style="position:absolute;left:80.00px;top:573.40px;width:38.00px;height:1.60px;background:#86c4f2;"></div>
<div style="position:absolute;left:0.00px;top:574.90px;width:1024.00px;height:1.20px;background:#dcdcdc;"></div>
<svg width="13.4" height="13.6" viewBox="0 0 13.4 13.6" style="left:12.8px;top:552.6px"><polygon points="0,1.9 5.6,1.1 5.6,6.4 0,6.4" fill="#fff"/><polygon points="6.5,1 13.2,0 13.2,6.4 6.5,6.4" fill="#fff"/><polygon points="0,7.2 5.6,7.2 5.6,12.5 0,11.7" fill="#fff"/><polygon points="6.5,7.2 13.2,7.2 13.2,13.6 6.5,12.6" fill="#fff"/></svg>
<svg width="17.4" height="14.2" viewBox="0 0 17.4 14.2" style="left:51.2px;top:552px"><path d="M0 1.2 Q0 .2 1 .2 L7 .2 L8 1.6 L0 1.6 Z" fill="#f2a81c"/><rect x="0" y="1.4" width="17.2" height="12.4" rx=".6" fill="#fcd462"/><rect x="3.4" y="8" width="10.4" height="6" fill="#3a96e0"/><rect x="6" y="10.8" width="5.2" height="3.2" fill="#fcd462"/></svg>
<svg width="18" height="16.4" viewBox="0 0 18 16.4" style="left:90px;top:551.8px"><polygon points="1.2,3.2 8.9,0.8 17.6,2.8 9.5,5.8" fill="#f6f6f6"/><polygon points="9.5,5.8 17.6,2.8 17.6,6.2 9.5,8.8" fill="#d6d6d6"/><polygon points="1.2,3.3 9.5,5.9 9.5,8.6 1.3,5.4" fill="#3c3c3c"/><circle cx="6.4" cy="6.7" r=".85" fill="#2fcc44"/><polygon points="0.3,8.4 3.6,7.4 12.7,8.8 9.8,10.2" fill="#f0f0f0"/><polygon points="0.3,8.4 9.8,10.2 9.8,16.0 0.3,14.2" fill="#dedede"/><polygon points="9.8,10.2 12.7,8.8 12.7,14.4 9.8,16.0" fill="#bcbcbc"/><rect x="2.2" y="10.4" width="1.5" height="2.8" fill="#555"/><rect x="6.0" y="11.2" width="1.5" height="2.8" fill="#555"/></svg>
<svg width="10.4" height="6.8" viewBox="0 0 10.4 6.8" style="left:824.6px;top:555.6px"><path d="M.4 6.2 L5.1 .8 L9.8 6.2" fill="none" stroke="#f2f2f2" stroke-width="1.1"/></svg>
<svg width="13.4" height="9.4" viewBox="0 0 13.4 9.4" style="left:842.2px;top:554.2px"><rect x="3.6" y="2" width="9.2" height="6.4" fill="none" stroke="#f2f2f2" stroke-width=".9"/><rect x="5" y="3.4" width="6.4" height="3.6" fill="#f2f2f2"/><path d="M1.6 0 L1.6 2 M3 0 L3 2 M.8 2 L3.8 2 L3.8 4.4 L2.3 5.6 L.8 4.4 Z M2.3 5.6 L2.3 8.8" fill="none" stroke="#f2f2f2" stroke-width=".8"/></svg>
<svg width="13.4" height="10.8" viewBox="0 0 13.4 10.8" style="left:861.6px;top:554.2px"><rect x="2.6" y=".4" width="10" height="6.8" fill="none" stroke="#f2f2f2" stroke-width=".9"/><path d="M7.6 7.2 L7.6 9.9 M4.6 10 L10.6 10" stroke="#f2f2f2" stroke-width=".9" fill="none"/><rect x=".2" y="1.2" width="3" height="2.6" fill="#1d2d40" stroke="#f2f2f2" stroke-width=".8"/><path d="M1.7 3.8 L1.7 9.6" stroke="#f2f2f2" stroke-width=".8"/></svg>
<svg width="13.6" height="11.4" viewBox="0 0 13.6 11.4" style="left:880.8px;top:553.6px"><path d="M.5 3.8 L2.6 3.8 L5.4 1 L5.4 10.2 L2.6 7.4 L.5 7.4 Z" fill="none" stroke="#f2f2f2" stroke-width=".85"/><path d="M7.2 3.8 Q8.6 5.6 7.2 7.4 M9 2.4 Q11.2 5.6 9 8.8 M10.8 1 Q13.8 5.6 10.8 10.2" fill="none" stroke="#f2f2f2" stroke-width=".85"/></svg>
<span style="position:absolute;left:901.90px;top:554.36px;font-size:9.5px;line-height:1;white-space:pre;color:#f0f0f0;transform-origin:0 0;transform:scaleX(0.8643);-webkit-text-stroke:0;">ENG</span>
<span style="position:absolute;left:943.00px;top:546.96px;font-size:9.5px;line-height:1;white-space:pre;color:#f0f0f0;transform-origin:0 0;transform:scaleX(0.8936);-webkit-text-stroke:0;">13:18</span>
<span style="position:absolute;left:930.50px;top:561.26px;font-size:9.5px;line-height:1;white-space:pre;color:#f0f0f0;transform-origin:0 0;transform:scaleX(0.9727);-webkit-text-stroke:0;">2024/04/15</span>
<svg width="13.4" height="13.6" viewBox="0 0 13.4 13.6" style="left:991.2px;top:552.4px"><path d="M.5 .5 L12.7 .5 L12.7 9.6 L9.2 9.6 L6.8 12.6 L6.8 9.6 L.5 9.6 Z" fill="none" stroke="#f2f2f2" stroke-width=".95"/></svg>
<div style="position:absolute;left:1020.30px;top:543.00px;width:0.70px;height:32.00px;background:#8a94a0;"></div>
</div>
</body></html>
